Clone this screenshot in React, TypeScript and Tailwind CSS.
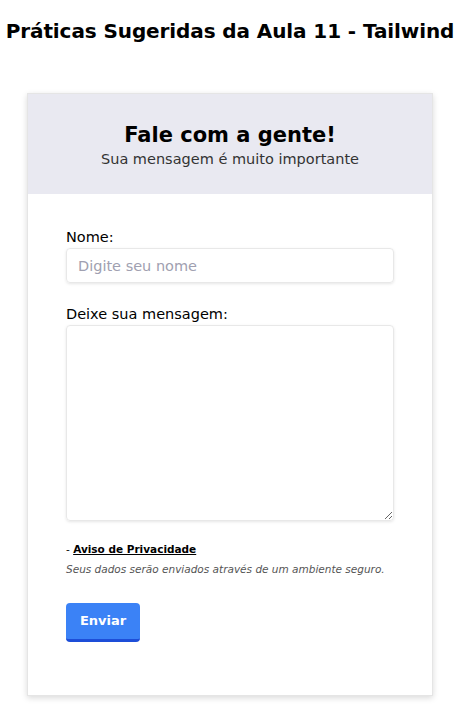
export default function App() {
  return (
    <div className="min-h-[720px] bg-white font-['DejaVu_Sans',sans-serif] text-black">
      <h1 className="pt-[17px] text-center text-[20px] font-semibold leading-[28px] tracking-[-0.1px]">
        Práticas Sugeridas da Aula 11 - Tailwind
      </h1>

      <div className="mx-[27px] mt-[48px] border border-[#e5e5e5] bg-white shadow-[0_2px_6px_rgba(0,0,0,0.15)]">
        <div className="flex h-[100px] flex-col items-center justify-center bg-[#e9e9f1] pt-[2px]">
          <h2 className="text-[21px] font-semibold leading-[28px]">Fale com a gente!</h2>
          <p className="text-[14.5px] leading-[20px] text-[#333]">Sua mensagem é muito importante</p>
        </div>

        <form className="px-[38px] pt-[33px] pb-[53px]">
          <label className="block text-[14.5px] leading-[20px]">Nome:</label>
          <input
            type="text"
            placeholder="Digite seu nome"
            className="mt-[1px] h-[35px] w-full rounded-[4px] border border-[#e8e8e8] px-[11px] text-[14.5px] shadow-[0_1px_3px_rgba(0,0,0,0.1)] outline-none placeholder:text-[#a0a0b0]"
          />

          <label className="mt-[21px] block text-[14.5px] leading-[20px]">Deixe sua mensagem:</label>
          <textarea className="mt-[1px] block h-[196px] w-full rounded-[4px] border border-[#e8e8e8] shadow-[0_1px_3px_rgba(0,0,0,0.1)] outline-none" />

          <p className="mt-[20px] text-[10.5px] leading-[16px]">
            - <a className="font-bold underline">Aviso de Privacidade</a>
          </p>
          <p className="mt-[5px] text-[10.5px] italic leading-[14px] text-[#555]">
            Seus dados serão enviados através de um ambiente seguro.
          </p>

          <button
            type="button"
            className="mt-[27px] h-[39px] w-[74px] rounded-[4px] border-b-[3px] border-[#1d4ed8] bg-[#3b82f6] text-[13px] font-bold text-white"
          >
            Enviar
          </button>
        </form>
      </div>
    </div>
  )
}
